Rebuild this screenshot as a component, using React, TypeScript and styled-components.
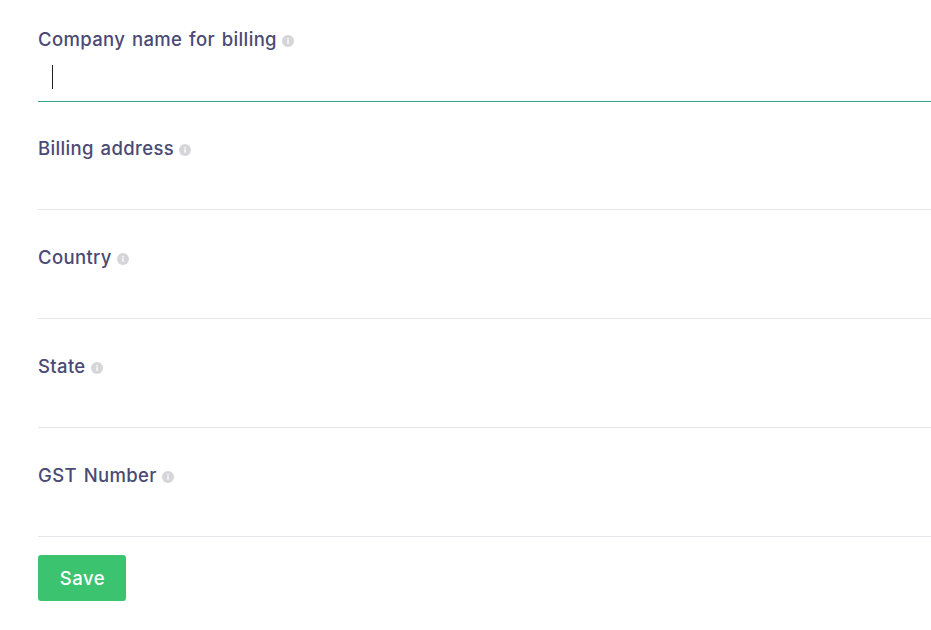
import React from 'react';
import styled, { createGlobalStyle } from 'styled-components';

const GlobalStyle = createGlobalStyle`
  html, body {
    margin: 0;
    padding: 0;
    background: #fff;
    font-family: Inter, "Open Sans", sans-serif;
  }
`;

const Page = styled.div`
  width: 931px;
  height: 630px;
  padding: 26.5px 0 0 38px;
  box-sizing: border-box;
  overflow: hidden;
`;

const FieldList = styled.div`
  display: flex;
  flex-direction: column;
  gap: 33.9px;
`;

const Field = styled.div`
  display: flex;
  flex-direction: column;
  height: 75px;
`;

const LabelRow = styled.label`
  display: flex;
  align-items: center;
  gap: 5px;
  height: 25px;
  color: #4a4a75;
  font-size: 18.5px;
  font-weight: 500;
  letter-spacing: 0.35px;
  word-spacing: 1.5px;

  svg {
    margin-top: 4px;
  }
`;

const InputRow = styled.div<{ $active?: boolean }>`
  display: flex;
  align-items: center;
  flex: 1;
  padding: 1px 0 0 14px;
  border-bottom: 1px solid ${props => (props.$active ? '#34a58f' : '#e6e6ea')};
`;

const Caret = styled.span`
  width: 1px;
  height: 24px;
  background: #1c1c28;
`;

const SaveButton = styled.button`
  display: block;
  width: 88px;
  height: 46px;
  margin-top: 18px;
  padding: 0 0 0 1px;
  border: none;
  border-radius: 3px;
  background: #3cc36f;
  color: #fff;
  font-family: inherit;
  font-size: 18.5px;
  font-weight: 500;
  letter-spacing: 0.5px;
`;

const InfoIcon = () => (
  <svg width="12" height="12" viewBox="0 0 12 12" aria-hidden="true">
    <circle cx="6" cy="6" r="6" fill="#d6d6da" />
    <rect x="5.3" y="5.2" width="1.4" height="3.6" fill="#fff" />
    <rect x="5.3" y="3" width="1.4" height="1.4" fill="#fff" />
  </svg>
);

const fields = ['Company name for billing', 'Billing address', 'Country', 'State', 'GST Number'];

const App = () => {
  return (
    <Page>
      <GlobalStyle />
      <FieldList>
        {fields.map((name, index) => (
          <Field key={name}>
            <LabelRow>
              {name}
              <InfoIcon />
            </LabelRow>
            <InputRow $active={index === 0}>{index === 0 && <Caret />}</InputRow>
          </Field>
        ))}
      </FieldList>
      <SaveButton>Save</SaveButton>
    </Page>
  );
};

export default App;
